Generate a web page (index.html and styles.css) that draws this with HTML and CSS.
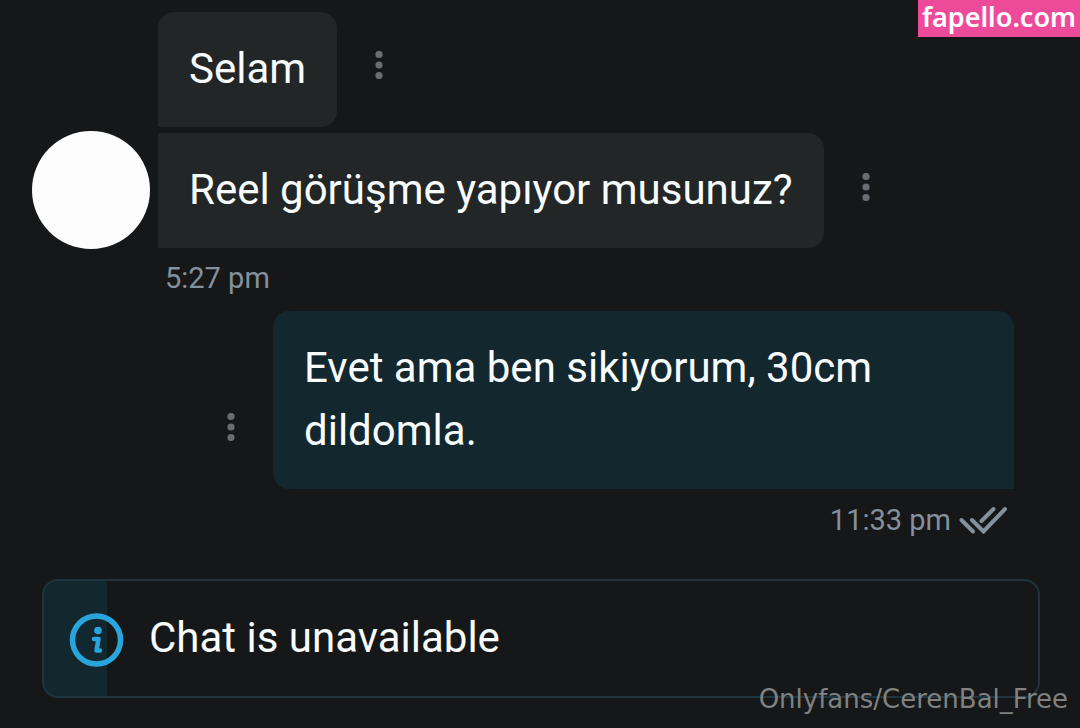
FILE: index.html
```html
<!DOCTYPE html>
<html lang="tr">
<head>
<meta charset="utf-8">
<meta name="viewport" content="width=device-width, initial-scale=1">
<title>Chat</title>
<link rel="stylesheet" href="styles.css">
</head>
<body>
<main class="chat">
  <section class="incoming">
    <div class="row indented">
      <p class="bubble">Selam</p>
      <button class="menu" type="button" aria-label="Message options"><svg class="dots" viewBox="0 0 8 28"><circle cx="4" cy="3.5" r="3.6"/><circle cx="4" cy="14" r="3.6"/><circle cx="4" cy="24.5" r="3.6"/></svg></button>
    </div>
    <div class="row">
      <div class="avatar"></div>
      <p class="bubble">Reel görüşme yapıyor musunuz?</p>
      <button class="menu" type="button" aria-label="Message options"><svg class="dots" viewBox="0 0 8 28"><circle cx="4" cy="3.5" r="3.6"/><circle cx="4" cy="14" r="3.6"/><circle cx="4" cy="24.5" r="3.6"/></svg></button>
    </div>
    <div class="meta indented"><time>5:27 pm</time></div>
  </section>
  <section class="outgoing">
    <div class="row">
      <button class="menu" type="button" aria-label="Message options"><svg class="dots" viewBox="0 0 8 28"><circle cx="4" cy="3.5" r="3.6"/><circle cx="4" cy="14" r="3.6"/><circle cx="4" cy="24.5" r="3.6"/></svg></button>
      <p class="bubble sent">Evet ama ben sikiyorum, 30cm dildomla.</p>
    </div>
    <div class="meta">
      <time>11:33 pm</time>
      <svg class="checks" viewBox="0 0 48 28" role="img" aria-label="Read"><path d="M2.500 14 14 25.500M13 14 24.500 25.500 46 3M22.500 15 34.500 3"/></svg>
    </div>
  </section>
  <section class="notice" role="status">
    <svg class="info" viewBox="0 0 54 54" aria-hidden="true"><circle cx="26.500" cy="28" r="24" fill="none" stroke="#27a5dc" stroke-width="5.500"/><circle cx="28" cy="18.500" r="3.800" fill="#27a5dc"/><path d="M24 27h4.500l-2 11.500h3.500" fill="none" stroke="#27a5dc" stroke-width="4.500" stroke-linecap="round" stroke-linejoin="round"/></svg>
    <p class="notice-text">Chat is unavailable</p>
  </section>
</main>
<div class="badge">fapello.com</div>
<div class="watermark">Onlyfans/CerenBal_Free</div>
</body>
</html>
```
FILE: styles.css
```css
* { box-sizing: border-box; }
body {
  margin: 0;
  min-height: 100vh;
  position: relative;
  background: #161718;
  color: #f8fcfd;
  font: 42px/63px Roboto, "Noto Sans", sans-serif;
}
p { margin: 0; }
.chat { padding: 12px 40px 30px 32px; }
.incoming { display: flex; flex-direction: column; gap: 4px; }
.row { display: flex; align-items: center; }
.indented { padding-left: 126px; }
.avatar {
  flex: none;
  width: 118px;
  height: 118px;
  margin-right: 8px;
  border-radius: 50%;
  background: #fcfdfc;
}
.bubble {
  padding: 25px 31px 27px;
  border-radius: 0 16px 16px 0;
  background: #222627;
}
.row.indented .bubble { border-top-left-radius: 16px; }
.menu {
  flex: none;
  align-self: flex-end;
  display: grid;
  place-items: center;
  width: 28px;
  height: 40px;
  margin: 0 28px 42px;
  padding: 0;
  border: 0;
  background: none;
}
.dots { width: 8px; height: 28px; fill: #696d72; }
.meta {
  display: flex;
  align-items: center;
  gap: 8px;
  color: #84909b;
  font-size: 29px;
  line-height: 50px;
}
.incoming .meta time { padding-left: 7px; }
.outgoing { margin: 8px 26px 0 168px; }
.outgoing .menu { margin-left: 17px; }
.sent {
  flex: 1;
  border-radius: 16px 16px 0 16px;
  background: #13272f;
}
.outgoing .meta {
  justify-content: flex-end;
  padding: 6px 7px 0 0;
}
.checks {
  width: 48px;
  height: 28px;
  fill: none;
  stroke: #84909b;
  stroke-width: 4;
  stroke-linecap: round;
}
.notice {
  display: flex;
  align-items: center;
  gap: 25px;
  min-height: 119px;
  margin: 34px 0 0 10px;
  padding: 0 26px;
  border: 2px solid #1e343e;
  border-radius: 16px;
  background: linear-gradient(to right, #13272f 63px, transparent 63px);
}
.notice-text { padding-bottom: 2px; }
.info { flex: none; width: 54px; height: 54px; overflow: visible; }
.badge {
  position: absolute;
  top: 0;
  right: 0;
  padding: 0 4px 4px;
  background: #ee4a9a;
  color: #fff;
  font: 600 27px/33px "Noto Sans", "Open Sans", sans-serif;
}
.watermark {
  position: absolute;
  right: 12px;
  bottom: 12px;
  color: #808181;
  font: 26px/34px "DejaVu Sans", sans-serif;
}
```
